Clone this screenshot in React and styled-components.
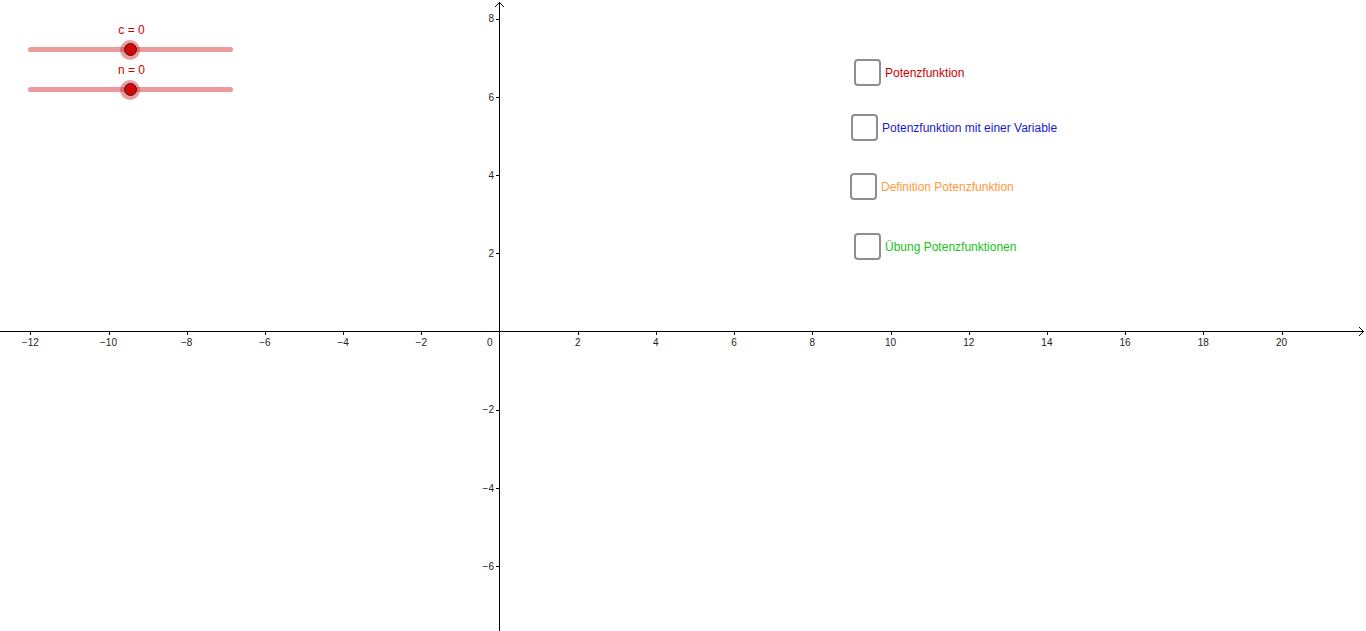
import React from 'react';
import styled, { createGlobalStyle } from 'styled-components';

const GlobalStyle = createGlobalStyle`
  html, body {
    margin: 0;
    padding: 0;
    background: #ffffff;
    overflow: hidden;
  }
  body {
    font-family: "Liberation Sans", Arial, sans-serif;
  }
`;

const WIDTH = 1366;
const HEIGHT = 631;
const OX = 499.5;
const OY = 331.5;
const UNIT = 39.1;

const sliders = [
  { name: 'c', value: 0, top: 23, left: 28 },
  { name: 'n', value: 0, top: 63, left: 28 },
];

const checkboxes = [
  { label: 'Potenzfunktion', color: '#cc0000', left: 854, top: 59 },
  { label: 'Potenzfunktion mit einer Variable', color: '#1a1acc', left: 851, top: 114 },
  { label: 'Definition Potenzfunktion', color: '#ff9a40', left: 850, top: 173 },
  { label: 'Übung Potenzfunktionen', color: '#17c317', left: 854, top: 233 },
];

function fmt(n) {
  return n < 0 ? '\u2212' + Math.abs(n) : String(n);
}

function Axes() {
  const xTicks = [];
  for (let v = -12; v <= 20; v += 2) if (v !== 0) xTicks.push(v);
  const yTicks = [];
  for (let v = -6; v <= 8; v += 2) if (v !== 0) yTicks.push(v);

  return (
    <Plot width={WIDTH} height={HEIGHT} viewBox={`0 0 ${WIDTH} ${HEIGHT}`}>
      <g stroke="#000" strokeWidth="1" fill="none">
        <line x1="0" y1={OY} x2={WIDTH - 2} y2={OY} />
        <line x1={OX} y1={HEIGHT} x2={OX} y2="2" />
        <polyline points={`${WIDTH - 7},${OY - 4.5} ${WIDTH - 2.5},${OY} ${WIDTH - 7},${OY + 4.5}`} />
        <polyline points={`${OX - 4.5},7 ${OX},2.5 ${OX + 4.5},7`} />
        {xTicks.map((v) => {
          const x = Math.round(OX + v * UNIT) + 0.5;
          return <line key={'xt' + v} x1={x} y1={OY} x2={x} y2={OY + 3.5} />;
        })}
        {yTicks.map((v) => {
          const y = Math.round(OY - v * UNIT) + 0.5;
          return <line key={'yt' + v} x1={OX - 3.5} y1={y} x2={OX} y2={y} />;
        })}
      </g>
      <g fill="#222" fontSize="10" fontFamily='"Liberation Sans", Arial, sans-serif'>
        {xTicks.map((v) => (
          <text key={'xl' + v} x={OX + v * UNIT} y={OY + 14.5} textAnchor="middle">
            {fmt(v)}
          </text>
        ))}
        <text x={OX - 7} y={OY + 14.5} textAnchor="end">0</text>
        {yTicks.map((v) => (
          <text key={'yl' + v} x={OX - 5.5} y={OY - v * UNIT + 3.6} textAnchor="end">
            {fmt(v)}
          </text>
        ))}
      </g>
    </Plot>
  );
}

function Slider({ name, value, top, left }) {
  return (
    <SliderBox style={{ top, left }}>
      <SliderLabel>
        {name} = {value}
      </SliderLabel>
      <Track>
        <Halo>
          <Knob />
        </Halo>
      </Track>
    </SliderBox>
  );
}

function CheckItem({ label, color, left, top }) {
  return (
    <CheckRow style={{ left, top }}>
      <Box />
      <CheckLabel $color={color}>{label}</CheckLabel>
    </CheckRow>
  );
}

export default function App() {
  return (
    <>
      <GlobalStyle />
      <Canvas>
        <Axes />
        {sliders.map((s) => (
          <Slider key={s.name} {...s} />
        ))}
        {checkboxes.map((c) => (
          <CheckItem key={c.label} {...c} />
        ))}
      </Canvas>
    </>
  );
}

const Canvas = styled.div`
  position: relative;
  width: ${WIDTH}px;
  height: ${HEIGHT}px;
  background: #ffffff;
  overflow: hidden;
`;

const Plot = styled.svg`
  display: block;
  position: absolute;
  inset: 0;
`;

const SliderBox = styled.div`
  position: absolute;
  width: 205px;
  display: flex;
  flex-direction: column;
  align-items: center;
`;

const SliderLabel = styled.div`
  font-size: 12px;
  line-height: 14px;
  color: #cc0000;
  margin-left: 2px;
  margin-bottom: 10px;
`;

const Track = styled.div`
  position: relative;
  width: 205px;
  height: 5px;
  border-radius: 3px;
  background: #eb9b9b;
`;

const Halo = styled.div`
  position: absolute;
  left: 92px;
  top: -7.5px;
  width: 20px;
  height: 20px;
  border-radius: 50%;
  background: rgba(215, 60, 60, 0.5);
  display: flex;
  align-items: center;
  justify-content: center;
`;

const Knob = styled.div`
  width: 11px;
  height: 11px;
  border-radius: 50%;
  background: #d40808;
  border: 1px solid #3a1a1a;
`;

const CheckRow = styled.div`
  position: absolute;
  display: flex;
  align-items: center;
  gap: 4px;
`;

const Box = styled.div`
  width: 23px;
  height: 23px;
  border: 2px solid #8e8e8e;
  border-radius: 4px;
  background: #ffffff;
`;

const CheckLabel = styled.span`
  font-size: 12px;
  color: ${(p) => p.$color};
  white-space: nowrap;
`;
